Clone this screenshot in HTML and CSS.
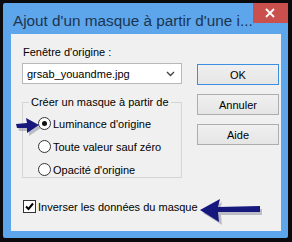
FILE: index.html
```html
<!DOCTYPE html>
<html lang="fr">
<head>
    <meta charset="UTF-8">
    <meta name="viewport" content="width=device-width, initial-scale=1.0">
    <title>Ajout d'un masque</title>
    <link rel="stylesheet" href="styles.css">
</head>
<body>

    <div class="window">
        <div class="titlebar">
            <span class="title">Ajout d'un masque à partir d'une i...</span>
            <span class="close">
                <svg width="10" height="10" viewBox="0 0 10 10">
                    <path d="M1 1 L9 9 M9 1 L1 9" stroke="#fff" stroke-width="1.8"/>
                </svg>
            </span>
        </div>

        <div class="client">
            <div class="main">
                <div class="left">
                    <div class="label">Fenêtre d'origine :</div>
                    <div class="combo">
                        <span>grsab_youandme.jpg</span>
                        <svg class="chevron" width="9" height="6" viewBox="0 0 9 6">
                            <path d="M1 1 L4.5 4.5 L8 1" fill="none" stroke="#444" stroke-width="1.4"/>
                        </svg>
                    </div>

                    <fieldset class="group">
                        <legend>Créer un masque à partir de</legend>
                        <div class="option"><span class="radio checked"></span>Luminance d'origine</div>
                        <div class="option"><span class="radio"></span>Toute valeur sauf zéro</div>
                        <div class="option"><span class="radio"></span>Opacité d'origine</div>
                    </fieldset>
                </div>

                <div class="buttons">
                    <div class="btn default">OK</div>
                    <div class="btn">Annuler</div>
                    <div class="btn">Aide</div>
                </div>
            </div>

            <div class="check-row">
                <span class="checkbox">
                    <svg width="11" height="11" viewBox="0 0 11 11">
                        <path d="M2 5.5 L4.5 8 L9 2.5" fill="none" stroke="#000" stroke-width="2"/>
                    </svg>
                </span>
                Inverser les données du masque
            </div>
        </div>

        <!-- tutorial arrows drawn over the dialog -->
        <svg class="arrow arrow-radio" width="28" height="20" viewBox="0 0 28 20">
            <polygon points="2,7 13,6 12,1 25,8 13,16 13,11 3,11" fill="#9a9aa8" opacity="0.6" transform="translate(1,2)"/>
            <polygon points="1,6 12,5 11,0 24,7 12,15 12,10 2,10" fill="#16187e"/>
        </svg>
        <svg class="arrow arrow-check" width="66" height="28" viewBox="0 0 66 28">
            <polygon points="3,13 22,2 20,10 62,9 62,15 21,15 22,25" fill="#9a9aa8" opacity="0.6" transform="translate(1,2)"/>
            <polygon points="1,12 21,1 19,9 61,8 61,14 19,14 20,24" fill="#16187e"/>
        </svg>
    </div>

</body>
</html>
```

FILE: styles.css
```css
body {
    margin: 0;
    background: #0b0b0d;
    width: 292px;
    height: 242px;
    overflow: hidden;
}
.window {
    position: relative;
    margin: 3px 4px 0 3px;
    height: 235px;
    background: #5ea6ec;
    border-radius: 2px;
    display: flex;
    flex-direction: column;
}
.titlebar {
    height: 31px;
    display: flex;
    align-items: flex-start;
    justify-content: space-between;
}
.title {
    font-family: "Liberation Sans", Arial, sans-serif;
    font-size: 15.3px;
    color: #1b3550;
    margin: 9px 0 0 10px;
    white-space: nowrap;
}
.close {
    flex: none;
    width: 35px;
    height: 20px;
    margin-right: 6px;
    background: #c9504d;
    display: flex;
    align-items: center;
    justify-content: center;
}
.client {
    flex: 1;
    margin: 0 7px 7px 8px;
    background: #f0f0f0;
    padding: 11px 2px 0 11px;
    font-family: "Liberation Sans", Arial, sans-serif;
    font-size: 11px;
    color: #000;
}
.main {
    display: flex;
    gap: 15px;
}
.left {
    width: 161px;
}
.label {
    line-height: 15px;
    margin-left: 1px;
}
.combo {
    margin-top: 3px;
    height: 19px;
    border: 1px solid #b8b8b8;
    background: #fff;
    display: flex;
    align-items: center;
    justify-content: space-between;
    padding: 0 6px 0 4px;
}
.group {
    margin: 11px 0 0 0;
    padding: 3px 0 6px 5px;
    border: 1px solid #d5d5d5;
    height: 83px;
    box-sizing: border-box;
}
.group legend {
    padding: 0 2px;
    margin-left: 1px;
    line-height: 14px;
    white-space: nowrap;
}
.option {
    display: flex;
    align-items: center;
    height: 23px;
    gap: 2px;
    margin-left: 10px;
}
.radio {
    width: 11px;
    height: 11px;
    border: 1px solid #333;
    border-radius: 50%;
    background: #fff;
    display: flex;
    align-items: center;
    justify-content: center;
}
.radio.checked::after {
    content: "";
    width: 5px;
    height: 5px;
    border-radius: 50%;
    background: #111;
}
.buttons {
    display: flex;
    flex-direction: column;
    gap: 9px;
    margin-top: 19px;
}
.btn {
    width: 80px;
    height: 19px;
    border: 1px solid #adadad;
    background: linear-gradient(#f0f0f0, #e5e5e5);
    display: flex;
    align-items: center;
    justify-content: center;
}
.btn.default {
    border-color: #3c8fe0;
}
.check-row {
    display: flex;
    align-items: center;
    gap: 2px;
    margin-top: 22px;
    margin-left: 1px;
}
.checkbox {
    width: 11px;
    height: 11px;
    border: 1px solid #333;
    background: #fff;
    display: flex;
    align-items: center;
    justify-content: center;
}
.arrow {
    position: absolute;
}
.arrow-radio {
    left: 12px;
    top: 115px;
}
.arrow-check {
    left: 196px;
    top: 195px;
}
```
